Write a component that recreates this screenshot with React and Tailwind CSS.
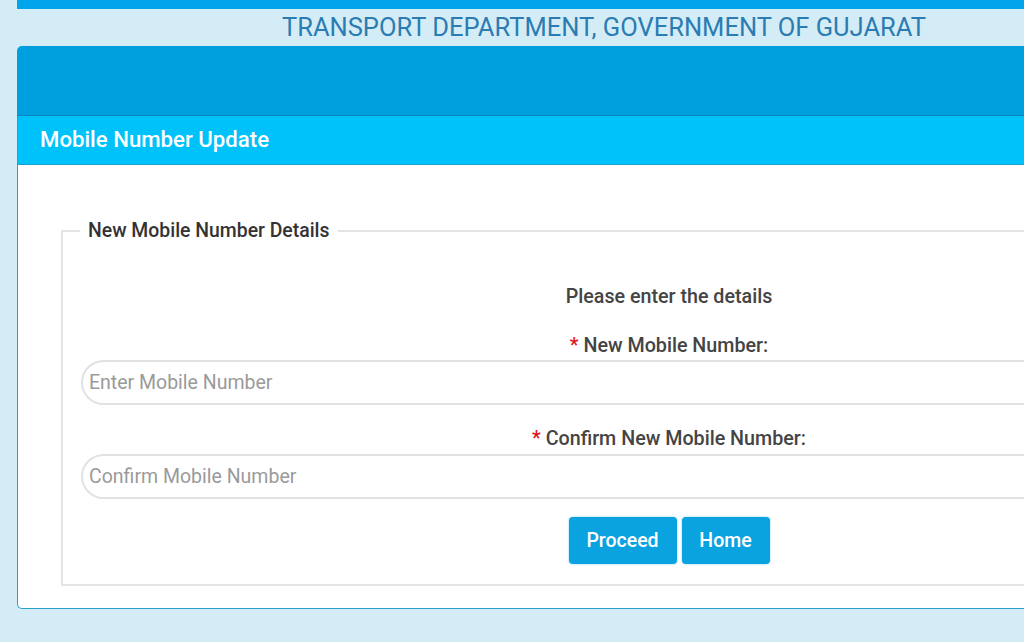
import React, { useState } from 'react';

const App = () => {
  const [mobile, setMobile] = useState('');
  const [confirmMobile, setConfirmMobile] = useState('');

  return (
    <div
      className="w-[1024px] h-[642px] overflow-hidden bg-[#d4ecf6]"
      style={{ fontFamily: 'Roboto, "Liberation Sans", sans-serif' }}
    >
      <div className="ml-[17px] w-[1320px]">
        {/* top strip */}
        <div className="h-[9px] bg-[#00a5ec]" />

        {/* department title */}
        <div className="w-[1174px] h-[37px] flex items-center justify-center">
          <h1 className="text-[25.5px] leading-none text-[#2a7cb2]">
            TRANSPORT DEPARTMENT, GOVERNMENT OF GUJARAT
          </h1>
        </div>

        {/* dark banner */}
        <div className="h-[70px] bg-[#009fdd] rounded-tl-[5px] border-b border-[#0a86b8]" />

        {/* panel */}
        <div className="bg-white border-l border-b border-[#2aa0cf] rounded-bl-[5px]">
          <div className="h-[49px] bg-[#00c2fa] border-b border-[#1aa3cf] flex items-center pl-[22px]">
            <h2 className="text-[22.2px] font-medium text-white">Mobile Number Update</h2>
          </div>

          <div className="pt-[54px] pb-[22px] pl-[43px]">
            <fieldset className="w-[1216px] border-2 border-[#e3e3e3] pl-[18px] pr-[18px] pb-[20px]">
              <legend className="px-[8px] -ml-[1px] text-[19.4px] leading-[24px] font-medium text-[#333]">
                New Mobile Number Details
              </legend>

              <div className="flex flex-col items-center pt-[42px]">
                <p className="text-[19.7px] font-medium text-[#444] leading-[24px]">
                  Please enter the details
                </p>

                <label className="mt-[25px] text-[19.7px] font-medium text-[#444] leading-[24px]">
                  <span className="text-[#e0141b]">*</span> New Mobile Number:
                </label>
                <input
                  type="text"
                  value={mobile}
                  onChange={(e) => setMobile(e.target.value)}
                  placeholder="Enter Mobile Number"
                  className="mt-[2px] w-full h-[45px] rounded-full border-2 border-[#e2e2e2] px-[6px] text-[19.5px] text-[#555] placeholder:text-[#9a9a9a] outline-none"
                />

                <label className="mt-[22px] text-[19.7px] font-medium text-[#444] leading-[24px]">
                  <span className="text-[#e0141b]">*</span> Confirm New Mobile Number:
                </label>
                <input
                  type="text"
                  value={confirmMobile}
                  onChange={(e) => setConfirmMobile(e.target.value)}
                  placeholder="Confirm Mobile Number"
                  className="mt-[3px] w-full h-[45px] rounded-full border-2 border-[#e2e2e2] px-[6px] text-[19.5px] text-[#555] placeholder:text-[#9a9a9a] outline-none"
                />

                <div className="mt-[18px] flex gap-[5px]">
                  <button className="h-[47px] w-[108px] rounded-[4px] bg-[#0ba3df] text-white text-[19.5px] font-medium shadow-[0_0_2px_rgba(0,160,220,0.6)]">
                    Proceed
                  </button>
                  <button className="h-[47px] w-[88px] rounded-[4px] bg-[#0ba3df] text-white text-[19.5px] font-medium shadow-[0_0_2px_rgba(0,160,220,0.6)]">
                    Home
                  </button>
                </div>
              </div>
            </fieldset>
          </div>
        </div>
      </div>
    </div>
  );
};

export default App;
